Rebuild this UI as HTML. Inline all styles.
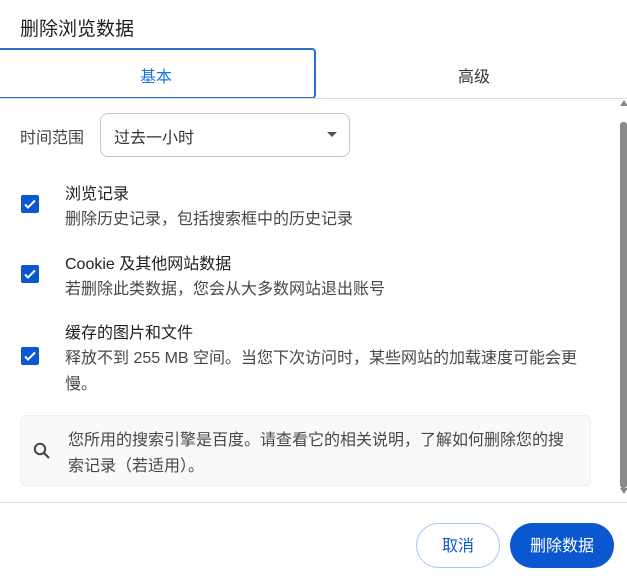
<!DOCTYPE html>
<html><head><meta charset="utf-8"><style>
*{margin:0;padding:0;box-sizing:border-box}
body{width:627px;height:580px;background:#fff;font-family:"Liberation Sans","Noto Sans CJK SC",sans-serif;color:#1f1f1f;position:relative;overflow:hidden}
.a{position:absolute;white-space:nowrap}
.cb{position:absolute;left:21px;width:18px;height:18px;background:#0b57d0;border-radius:2px}
.cb svg{position:absolute;left:2px;top:2px}
.t{font-size:16px;color:#1f1f1f}
.s{font-size:16px;color:#474747}
</style></head><body>
<div class="a" style="left:20px;top:14px;font-size:19px;">删除浏览数据</div>
<div class="a" style="left:-3px;top:48px;width:319px;height:51px;border:2px solid #2a6fd0;border-radius:4px;"></div>
<div class="a" style="left:0;top:98px;width:627px;height:1px;background:#dadce0"></div>
<div class="a" style="left:140px;top:63px;font-size:16px;color:#1a73e8">基本</div>
<div class="a" style="left:458px;top:63px;font-size:16px;color:#333">高级</div>
<div class="a" style="left:20px;top:124px;font-size:16px;color:#444">时间范围</div>
<div class="a" style="left:100px;top:113px;width:250px;height:44px;border:1px solid #c7c7c7;border-radius:8px;"></div>
<div class="a" style="left:114px;top:124px;font-size:16px;color:#333">过去一小时</div>
<div class="a" style="left:327px;top:132px;width:0;height:0;border-left:5px solid transparent;border-right:5px solid transparent;border-top:5px solid #555"></div>
<div class="cb" style="top:195px"><svg width="14" height="14" viewBox="0 0 14 14"><path d="M2 7.5l3 3 7-7" stroke="#fff" stroke-width="2" fill="none"/></svg></div>
<div class="a t" style="left:65px;top:180px">浏览记录</div>
<div class="a s" style="left:65px;top:205px">删除历史记录，包括搜索框中的历史记录</div>
<div class="cb" style="top:265px"><svg width="14" height="14" viewBox="0 0 14 14"><path d="M2 7.5l3 3 7-7" stroke="#fff" stroke-width="2" fill="none"/></svg></div>
<div class="a t" style="left:65px;top:250px">Cookie 及其他网站数据</div>
<div class="a s" style="left:65px;top:275px">若删除此类数据，您会从大多数网站退出账号</div>
<div class="cb" style="top:347px"><svg width="14" height="14" viewBox="0 0 14 14"><path d="M2 7.5l3 3 7-7" stroke="#fff" stroke-width="2" fill="none"/></svg></div>
<div class="a t" style="left:65px;top:319px">缓存的图片和文件</div>
<div class="a s" style="left:65px;top:344px">释放不到 255 MB 空间。当您下次访问时，某些网站的加载速度可能会更</div>
<div class="a s" style="left:65px;top:370px">慢。</div>
<div class="a" style="left:20px;top:415px;width:571px;height:71px;background:#f8f9fa;border:1px solid #eceef1;border-radius:6px"></div>
<svg class="a" style="left:32px;top:441px" width="20" height="20" viewBox="0 0 20 20"><circle cx="8" cy="8" r="5.2" stroke="#444" stroke-width="2" fill="none"/><path d="M12 12l5 5" stroke="#444" stroke-width="2.2"/></svg>
<div class="a s" style="left:68px;top:426px">您所用的搜索引擎是百度。请查看它的相关说明，了解如何删除您的搜</div>
<div class="a s" style="left:68px;top:452px">索记录（若适用）。</div>
<div class="a" style="left:620px;top:100px;width:0;height:0;border-left:4px solid transparent;border-right:4px solid transparent;border-bottom:6px solid #888"></div>
<div class="a" style="left:620px;top:122px;width:7px;height:366px;background:#8a8a8a;border-radius:3px"></div>
<div class="a" style="left:620px;top:488px;width:0;height:0;border-left:4px solid transparent;border-right:4px solid transparent;border-top:6px solid #888"></div>
<div class="a" style="left:0;top:502px;width:627px;height:1px;background:#dadce0"></div>
<div class="a" style="left:416px;top:523px;width:84px;height:45px;border:1px solid #a8c7fa;border-radius:23px;color:#0b57d0;font-size:16px;text-align:center;line-height:45px">取消</div>
<div class="a" style="left:510px;top:523px;width:104px;height:45px;background:#0b57d0;border-radius:23px;color:#fff;font-size:16px;text-align:center;line-height:47px">删除数据</div>
</body></html>
